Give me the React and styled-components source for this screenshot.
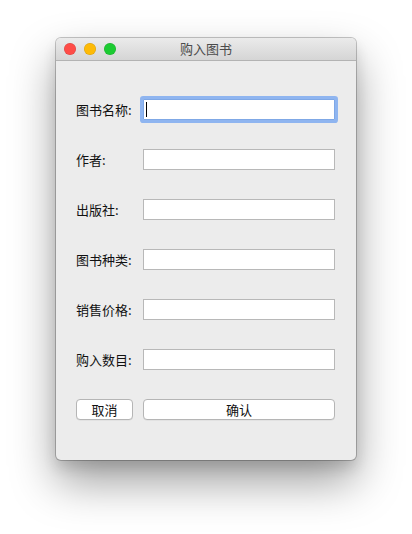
import React from "react";
import styled, { createGlobalStyle } from "styled-components";

const GlobalStyle = createGlobalStyle`
  html, body {
    margin: 0;
    padding: 0;
    background: #ffffff;
  }
  body {
    font-family: "Noto Sans CJK SC", "Noto Sans", "Liberation Sans", sans-serif;
  }
`;

const Page = styled.div`
  width: 412px;
  height: 534px;
  display: flex;
  justify-content: center;
  padding-top: 38px;
  box-sizing: border-box;
`;

const Window = styled.div`
  width: 300px;
  height: 422px;
  display: flex;
  flex-direction: column;
  background: #ececec;
  border-radius: 5px;
  overflow: hidden;
  box-shadow: 0 0 0 1px rgba(0, 0, 0, 0.22), 0 22px 45px rgba(0, 0, 0, 0.38),
    0 8px 14px rgba(0, 0, 0, 0.12);
`;

const TitleBar = styled.div`
  position: relative;
  height: 22px;
  flex-shrink: 0;
  display: flex;
  align-items: center;
  justify-content: center;
  background: linear-gradient(#ebebeb, #d5d5d5);
  border-bottom: 1px solid #b3b3b3;
`;

const Lights = styled.div`
  position: absolute;
  left: 8px;
  top: 5px;
  display: flex;
  gap: 8px;
`;

const Light = styled.span`
  width: 12px;
  height: 12px;
  border-radius: 50%;
  background: ${(p) => p.color};
  box-shadow: inset 0 0 0 0.5px rgba(0, 0, 0, 0.15);
`;

const Title = styled.div`
  font-size: 13px;
  color: #4b4b4b;
  line-height: 22px;
`;

const Form = styled.div`
  display: grid;
  grid-template-columns: 67px 1fr;
  grid-auto-rows: 21px;
  row-gap: 29px;
  padding: 38px 21px 0 20px;
`;

const Label = styled.label`
  font-size: 13px;
  color: #111;
  display: flex;
  align-items: center;
  white-space: nowrap;
`;

const Field = styled.div`
  position: relative;
  display: flex;
`;

const Input = styled.input`
  flex: 1;
  min-width: 0;
  height: 21px;
  box-sizing: border-box;
  border: 1px solid ${(p) => (p.$focused ? "#7fa8e6" : "#b8b8b8")};
  background: #fff;
  outline: none;
  padding: 0 3px;
  font-size: 13px;
  caret-color: transparent;
  box-shadow: ${(p) => (p.$focused ? "0 0 0 3px #8fb5f0" : "none")};
  border-radius: ${(p) => (p.$focused ? "1px" : "0")};
`;

const Caret = styled.span`
  position: absolute;
  left: 3px;
  top: 3px;
  width: 1px;
  height: 15px;
  background: #000;
`;

const Button = styled.button`
  height: 21px;
  box-sizing: border-box;
  border: 1px solid #b5b5b5;
  border-radius: 4px;
  background: #fff;
  font-family: inherit;
  font-size: 13px;
  color: #111;
  padding: 0;
  line-height: 19px;
  box-shadow: 0 0.5px 0 rgba(0, 0, 0, 0.08);
`;

const CancelButton = styled(Button)`
  width: 57px;
`;

const fields = ["图书名称:", "作者:", "出版社:", "图书种类:", "销售价格:", "购入数目:"];

export default function App() {
  return (
    <>
      <GlobalStyle />
      <Page>
        <Window>
          <TitleBar>
            <Lights>
              <Light color="#fe4c47" />
              <Light color="#fdba06" />
              <Light color="#1ccb32" />
            </Lights>
            <Title>购入图书</Title>
          </TitleBar>
          <Form>
            {fields.map((f, i) => (
              <React.Fragment key={f}>
                <Label>{f}</Label>
                <Field>
                  <Input $focused={i === 0} readOnly />
                  {i === 0 && <Caret />}
                </Field>
              </React.Fragment>
            ))}
            <CancelButton>取消</CancelButton>
            <Button>确认</Button>
          </Form>
        </Window>
      </Page>
    </>
  );
}
